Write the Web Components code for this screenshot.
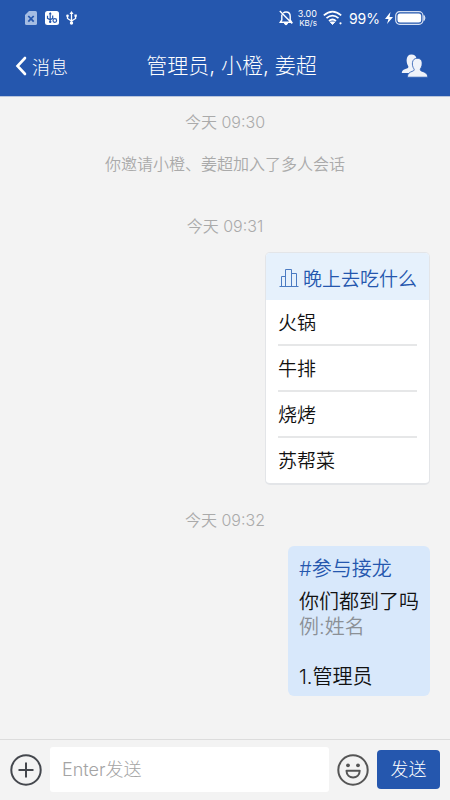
<!DOCTYPE html>
<html lang="zh-CN">
<head>
<meta charset="utf-8">
<meta name="viewport" content="width=device-width, initial-scale=1">
<title>管理员, 小橙, 姜超</title>
<style>
body { margin: 0; background: #f3f3f3; font-family: Inter, "Noto Sans CJK SC", sans-serif; font-weight: 350; --brand: #2557ae; }
</style>
</head>
<body>
<chat-app></chat-app>

<template id="t-app">
<style>
:host { display: flex; flex-direction: column; min-height: 100vh; }
header { background: var(--brand); color: #fff; border-bottom: 1px solid #b9c5dc; }
main { flex: 1; display: flex; flex-direction: column; padding: 13px 20px 40px; }
.own { align-self: flex-end; }
</style>
<header>
  <status-bar></status-bar>
  <nav-bar><span slot="back">消息</span>管理员, 小橙, 姜超</nav-bar>
</header>
<main>
  <chat-note>今天 09:30</chat-note>
  <chat-note style="margin-top:18px">你邀请小橙、姜超加入了多人会话</chat-note>
  <chat-note style="margin-top:38px">今天 09:31</chat-note>
  <poll-card class="own" style="margin-top:14px">
    <span slot="title">晚上去吃什么</span>
    <poll-option>火锅</poll-option><poll-option>牛排</poll-option><poll-option>烧烤</poll-option><poll-option>苏帮菜</poll-option>
  </poll-card>
  <chat-note style="margin-top:23px">今天 09:32</chat-note>
  <chain-bubble class="own" style="margin-top:14px">
    <span slot="title">#参与接龙</span>
    <span slot="question">你们都到了吗</span>
    <span slot="example">例:姓名</span>
    <span slot="entry">1.管理员</span>
  </chain-bubble>
</main>
<message-composer></message-composer>
</template>

<template id="t-status">
<style>
:host { display: flex; align-items: center; height: 36px; padding: 0 24px 0 25px; font-size: 14px; font-weight: 400; }
svg { display: block; flex: none; }
.left { display: flex; align-items: center; gap: 8px; flex: 1; }
.rate { display: grid; gap: 1px; font-size: 9px; line-height: 9px; text-align: right; margin: 0 6px 0 5px; }
.rate small { font-size: 8px; line-height: 8px; }
.pct { margin: 0 5px 0 6px; }
</style>
<div class="left">
  <svg width="12" height="16" viewBox="0 0 12 16"><path d="M4 1h6.5Q12 1 12 2.500v11q0 1.500-1.500 1.500h-9Q0 15 0 13.500V5z" fill="#a5bde3"/><path d="M3.300 6l5.400 5.600M8.700 6l-5.400 5.600" stroke="#2557ae" stroke-width="1.800"/></svg>
  <svg width="14" height="16" viewBox="0 0 14 16"><rect y="1" width="14" height="14" rx="2.500" fill="#fff"/><g fill="none" stroke="#2557ae" stroke-width="1.200"><path d="M5.200 3v9.500M2.500 5.800v2.500l2.700 1.500 2.500-1.500V5.500"/><circle cx="9.800" cy="10.500" r="1.800"/></g><circle cx="5.200" cy="11.800" r="1.200" fill="#2557ae"/><path d="M5.200 2l1.500 2.200h-3z" fill="#2557ae"/></svg>
  <svg width="12" height="16" viewBox="0 0 12 16" fill="#fff" style="margin-left:-1px"><path d="M5.500 1l2 3h-4z"/><circle cx="5.500" cy="13" r="1.700"/><circle cx="1.500" cy="5.800" r="1.300"/><path d="M8.400 4.500h2.400v2.200H8.400z"/><path d="M5.500 3v10M1.500 6v2.500l4 2.500 4.100-2.500V6" fill="none" stroke="#fff" stroke-width="1.300"/></svg>
</div>
<svg width="14" height="16" viewBox="0 0 14 16" fill="none" stroke="#fff" stroke-width="1.400"><path d="M2.800 4.500V10L1.300 12.300h11.400L11.200 10V6.300C11.200 3.500 9.500 2 7 2 6 2 5 2.300 4.200 3M.8 1l12.400 12.500"/><path d="M5.200 13.500h3.600L7 15z" fill="#fff" stroke-width="1"/></svg>
<div class="rate"><span>3.00</span><small>KB/s</small></div>
<svg width="20" height="16" viewBox="0 0 20 16" fill="none" stroke="#fff" stroke-width="1.700"><path d="M.8 5.300Q9.500-2.200 18.200 5.300M3.500 8.200q6-5.200 12 0M6 11q3.500-3 7 0"/><path d="M7.300 12h4.400l-2.200 2.500z" fill="#fff" stroke-width="1"/><circle cx="17.500" cy="13.300" r="1.100" fill="#fff" stroke="none"/></svg>
<span class="pct">99%</span>
<svg width="8" height="12" viewBox="0 0 8 12" fill="#fff"><path d="M5.500 0L0 7h3.500L2 12l6-7H4.500z"/></svg>
<svg width="31" height="14" viewBox="0 0 31 14" style="margin-left:2px"><rect x=".7" y=".7" width="27.300" height="12.600" rx="4" fill="none" stroke="#d7e1f3" stroke-width="1.200"/><rect x="2.500" y="2.500" width="23.700" height="9" rx="2.500" fill="#fff"/><path d="M29 4.500q2 2.500 0 5z" fill="#d7e1f3" stroke="#d7e1f3"/></svg>
</template>

<template id="t-nav">
<style>
:host { display: flex; align-items: center; height: 59px; padding: 0 22px 0 15px; margin-bottom: 1px; box-sizing: border-box; font-weight: 300; }
button { all: unset; display: flex; align-items: center; cursor: pointer; }
.back { width: 60px; gap: 5px; font-size: 18px; }
h1 { flex: 1; margin: 0; font-size: 21px; line-height: 30px; font-weight: inherit; text-align: center; white-space: nowrap; }
.people { width: 40px; justify-content: flex-end; }
svg { display: block; flex: none; }
</style>
<button class="back"><svg width="12" height="20" viewBox="0 0 12 20"><path d="M10 2L2.500 10l7.500 8" fill="none" stroke="#fff" stroke-width="2.600" stroke-linecap="round"/></svg><slot name="back"></slot></button>
<h1><slot></slot></h1>
<button class="people" aria-label="成员"><svg width="27" height="24" viewBox="0 0 27 24" fill="#f0f3fa"><path d="M10.500.5c2.800 0 4.500 1.200 5 4l-1 11-5 3.500H.8c.2-3 2.200-3.600 5.200-4.600 1.500-.5 1.700-1.500 1-2.700C5 8.500 4.500.5 10.500.5z"/><path d="M16 4.300c4.400 0 5.700 3.200 4.900 7.200-.3 1.500-1 2.500-1.500 3.300-.4 1.300 0 1.900 1.400 2.400 3 1 5.700 2 6 6H6.300c.3-3.800 2.300-5 5.300-6 1.500-.5 2-1.300 1.300-2.400C10.500 11.500 10.500 4.300 16 4.300z" stroke="#2557ae" stroke-width=".8"/></svg></button>
</template>

<template id="t-note">
<style>
:host { display: block; text-align: center; font-size: 16px; line-height: 24px; color: #aaa; }
</style>
<slot></slot>
</template>

<template id="t-poll">
<style>
:host { display: block; background: #fff; border: 1px solid #e3e5e8; border-bottom-width: 2px; border-radius: 5px; overflow: hidden; font-size: 19px; color: #111; }
header { display: flex; align-items: center; gap: 4px; height: 47px; padding: 2px 12px 0 13px; box-sizing: border-box; background: #e6f1fc; color: var(--brand); }
div { padding: 0 12px; }
</style>
<header><svg width="20" height="20" viewBox="0 0 20 20" fill="none" stroke="#4b7bc2"><path d="M.5 18.500h19M2.500 18V8.500h4M6.500 18V1.500h6V18M12.500 5.500h5V18"/></svg><slot name="title"></slot></header>
<div role="list"><slot></slot></div>
</template>

<template id="t-option">
<style>
:host { display: block; padding-top: 4px; line-height: 40px; border-bottom: 2px solid #e6e7e8; }
:host(:last-child) { padding-bottom: 1px; border-bottom: 0; }
</style>
<slot></slot>
</template>

<template id="t-chain">
<style>
:host { display: block; background: #d8e8fb; border-radius: 6px; padding: 11px 11px 6px; font-size: 20px; line-height: 25px; color: #111; }
::slotted(span) { display: block; }
.title { color: var(--brand); margin-bottom: 8px; }
.example { color: #8b9096; margin-bottom: 25px; }
</style>
<div class="title"><slot name="title"></slot></div>
<div><slot name="question"></slot></div>
<div class="example"><slot name="example"></slot></div>
<div><slot name="entry"></slot></div>
</template>

<template id="t-composer">
<style>
:host { display: block; border-top: 1px solid #dcdcdc; font-weight: 300; }
form { display: flex; align-items: center; gap: 8px; padding: 7px 10px 8px; }
button { all: unset; cursor: pointer; flex: none; }
svg { display: block; }
input { flex: 1; min-width: 0; height: 45px; box-sizing: border-box; border: 0; border-radius: 3px; background: #fff; padding: 0 12px; font: inherit; font-size: 18px; color: #111; }
input::placeholder { color: #a4a4a4; opacity: 1; }
.send { width: 63px; height: 39px; line-height: 36px; text-align: center; border-radius: 4px; background: var(--brand); color: #fff; font-size: 18px; }
</style>
<form>
  <button type="button" aria-label="更多"><svg width="32" height="32" viewBox="0 0 32 32" fill="none" stroke="#44474d" stroke-width="2"><circle cx="16" cy="16" r="14.700"/><path d="M16 8.500v15M8.500 16h15"/></svg></button>
  <input type="text" aria-label="消息内容" placeholder="Enter发送">
  <button type="button" aria-label="表情"><svg width="32" height="32" viewBox="0 0 32 32" fill="none" stroke="#555" stroke-width="2"><circle cx="16" cy="16" r="14.700"/><path d="M9.500 16.800h13.200c0 8.800-13.200 8.800-13.200 0z" stroke-linejoin="round"/><g fill="#555" stroke="none"><circle cx="11" cy="11.300" r="1.900"/><circle cx="21" cy="11.300" r="1.900"/></g></svg></button>
  <button class="send" type="button">发送</button>
</form>
</template>

<script>
const define = (name, id) => customElements.define(name, class extends HTMLElement {
  constructor() {
    super();
    this.attachShadow({ mode: "open" }).append(document.getElementById(id).content.cloneNode(true));
  }
  connectedCallback() {
    if (name === "poll-option") this.setAttribute("role", "listitem");
  }
});
define("status-bar", "t-status");
define("nav-bar", "t-nav");
define("chat-note", "t-note");
define("poll-option", "t-option");
define("poll-card", "t-poll");
define("chain-bubble", "t-chain");
define("message-composer", "t-composer");
define("chat-app", "t-app");
</script>
</body>
</html>
